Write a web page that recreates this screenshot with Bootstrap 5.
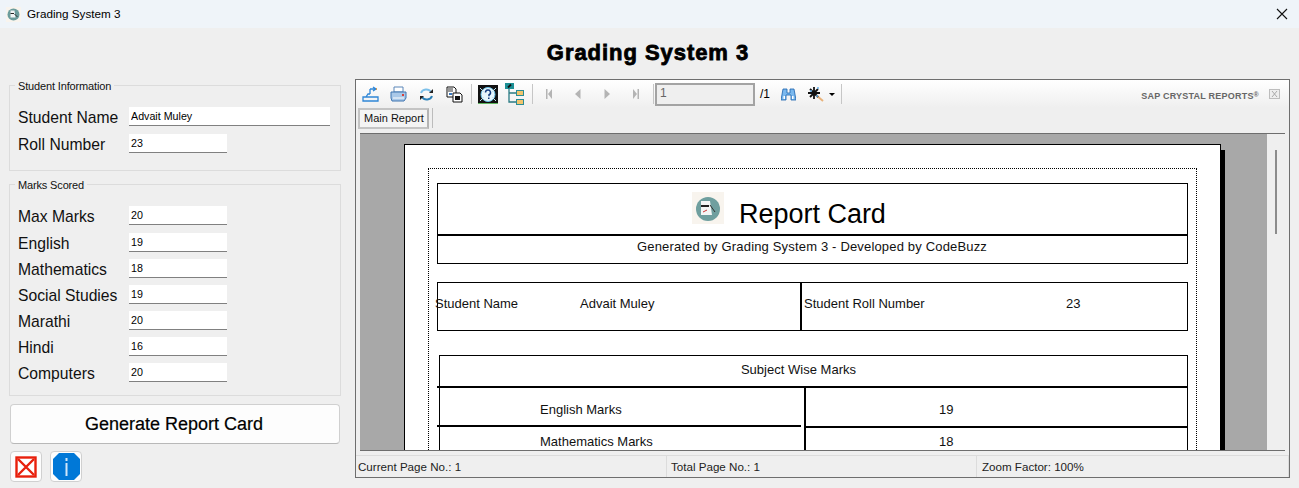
<!DOCTYPE html>
<html lang="en">
<head>
<meta charset="utf-8">
<title>Grading System 3</title>
<link href="https://cdn.jsdelivr.net/npm/bootstrap@5.3.0/dist/css/bootstrap.min.css" rel="stylesheet">
<style>
html,body{height:488px;overflow:hidden}
body{background:#efefef;font-family:"Liberation Sans",Arial,sans-serif;color:#000}
.win-bar{height:28px;background:#eff4f9;padding-left:6px;font-size:11.7px;gap:6px}
.win-close{margin-left:auto;margin-right:11px;line-height:0}
.app-title{height:50px;font-size:22px;font-weight:700;letter-spacing:.95px;-webkit-text-stroke:.8px #000;margin:0;padding-right:3px;width:100%;text-align:center;line-height:49px}
.workspace{padding-left:9px;height:410px}
.side{width:332px}
.grp{border:1px solid #dcdcdc;margin:0;padding:0 0 0 8px;min-width:0}
.grp legend{float:none;width:auto;font-size:11px;line-height:13px;margin:0 0 0 -3px;padding:2px 3px 0;letter-spacing:-.15px;color:#111}
.grp-info{height:93px}
.grp-marks{height:219px;margin-top:6px}
.frow{height:26px;align-items:flex-start}
.frow label{width:111px;font-size:15.7px;line-height:19px;padding-top:1px;white-space:nowrap;color:#111}
.row-first{margin-top:14px}
.row-top{height:27px}
.row-name{margin-top:14px}
.row-roll{margin-top:1px}
.fld.form-control{width:98px;height:19px;min-height:0;border:0;border-bottom:1px solid #808080;border-radius:0;padding:0 2px;font-size:10.7px;line-height:17px;background:#fff;color:#000;box-shadow:none}
.fld.fld-wide{width:201px}
.gen-btn.btn{display:block;width:330px;height:40px;margin:8px 0 0 1px;background:#fdfdfd;border:1px solid #d0d0d0;border-bottom-color:#b8b8b8;border-radius:4px;font-size:18px;line-height:1;color:#000;padding:0 2px 0 0;-webkit-text-stroke:.2px #000}
.ico-btn.btn{width:32px;height:31px;padding:0;background:#fdfdfd;border:1px solid #d0d0d0;border-radius:4px;display:flex;align-items:center;justify-content:center}
.ico-row{margin:7px 0 0 1px;gap:8px}
.viewer{width:935px;height:399px;margin:1px 0 0 14px;border:1px solid #6e6e6e;background:#efefef;display:flex;flex-direction:column}
.tools{height:28px;background:linear-gradient(#fff,#efefef);flex:none;align-items:center}
.tb{width:28px;height:24px;flex:none}
.sep{width:1px;height:20px;background:#c6c6c6;flex:none}
.gap-a{margin-left:3px}
.gap-b{margin-left:14px}
.gap-c{margin-left:6px}
.t-help{margin-left:6px;margin-right:7px}
.t-tree{margin-right:8px}
.t-nav{margin-left:13px;gap:23px}
.t-find{margin-left:6px}
.t-wand{margin-left:12px}
.t-caret{margin-left:5px}
.t-x{margin-right:9px}
.pg-box{width:100px;height:23px;border:2px solid #a3a3a3;background:#efefef;font-size:12px;line-height:16px;color:#666;padding-left:3px;margin-left:1px}
.pg-tot{font-size:12px;margin-left:5px;width:15px}
.brand{margin-left:auto;font-size:9px;font-weight:700;color:#666;letter-spacing:.22px;margin-right:10px;padding-top:5px}
.brand sup{font-size:7px;top:-.2em}
.tabs{height:23px;flex:none;padding-left:2px;align-items:flex-start}
.rtab{width:71px;height:21px;border:2px solid #c4c4c4;border-right-color:#b4b4b4;background:#f4f4f4;font-size:11px;line-height:17px;padding-left:4px;color:#111}
.tab-sep{width:1px;height:20px;background:#bcbcbc;margin-left:3px}
.port{flex:none;margin:2px 4px 0 4px;height:318px;border-top:1px solid #6e6e6e;border-bottom:1px solid #6e6e6e;display:flex;overflow:hidden;background:#a8a8a8}
.canvas{width:907px;flex:none;padding:10px 0 0 44px;overflow:hidden}
.paper{width:817px;height:340px;background:#fff;border:1px solid #000;box-shadow:4px 6px 0 #000;padding:23px 0 0 23px}
.dotted{width:769px;height:320px;border:1px dotted #000;border-bottom:0;padding:14px 0 0 8px;font-size:13px;color:#111}
.sbar{flex:1;background:#efefef;padding:16px 0 0 8px}
.sthumb{width:2px;height:84px;background:#8c8c8c}
.rbox{width:751px;border:1px solid #000}
.rb-head{height:50px;gap:15px;padding-left:254px;padding-top:8px}
.rb-title{font-size:27px;line-height:44px;color:#000;letter-spacing:-.02px}
.rb-sub{height:29px;border-top:2px solid #000;margin-left:-1px;text-align:center;line-height:21px;letter-spacing:.17px}
.rb-mid{height:49px;margin-top:18px}
.rb-mid .hcell{line-height:41px;white-space:nowrap}
.c-a{width:367px;flex:none;border-right:2px solid #000;margin-left:-3px;display:flex}
.c-a .k{width:145px}
.c-b{padding-left:2px;display:flex}
.c-b .k{width:262px}
.rb-sub3{width:749px;height:200px;margin:24px 0 0 2px;border-bottom:0;overflow:visible}
.rb-h3{height:32px;text-align:center;line-height:27px;letter-spacing:.02px;padding-right:27px;border-bottom:2px solid #000;margin-left:-3px}
.rb-l{width:364px;flex:none}
.rb-l .lc{margin-left:-3px;margin-right:3px;height:39px;border-bottom:2px solid #000;padding-left:103px;line-height:44px}
.rb-l .lc+.lc{border:0;height:30px;line-height:29px}
.rb-r{flex:1;border-left:2px solid #000;height:200px}
.rb-r .rc{height:40px;border-bottom:2px solid #000;padding-left:133px;line-height:44px}
.rb-r .rc+.rc{border:0;line-height:27px}
.stat{height:22px;margin-top:4px;flex:none;border-top:1px solid #dcdcdc;font-size:11.6px;line-height:21px;color:#222}
.st{height:21px;border-right:1px solid #dcdcdc}
.st1{width:310px;margin-left:1px;padding-left:1px}
.st2{width:310px;padding-left:4px}
.st3{flex:1;padding-left:5px}
</style>
</head>
<body>
<div class="win-bar d-flex align-items-center">
  <svg width="15" height="15" viewBox="0 0 15 15"><rect width="15" height="15" fill="#f8f4ee"/><circle cx="7.500" cy="7.500" r="6" fill="#6b9c9c"/><path d="M4.500 3.500h4l1 7h-5z" fill="#f2f5f5"/><path d="M4.500 6.500h3.500" stroke="#222"/><path d="M8.500 7l3 3" stroke="#333"/></svg>
  <span>Grading System 3</span>
  <span class="win-close"><svg width="12" height="12" viewBox="0 0 12 12"><path d="M1 1l10 10M11 1L1 11" stroke="#111" stroke-width="1.1"/></svg></span>
</div>
<h1 class="app-title">Grading System 3</h1>
<div class="workspace d-flex">
  <div class="side">
    <fieldset class="grp grp-info">
      <legend>Student Information</legend>
      <div class="frow d-flex row-name"><label>Student Name</label><input class="form-control fld fld-wide" value="Advait Muley"></div>
      <div class="frow d-flex row-roll"><label>Roll Number</label><input class="form-control fld" value="23"></div>
    </fieldset>
    <fieldset class="grp grp-marks">
      <legend>Marks Scored</legend>
      <div class="frow d-flex row-first row-top"><label>Max Marks</label><input class="form-control fld" value="20"></div>
      <div class="frow d-flex"><label>English</label><input class="form-control fld" value="19"></div>
      <div class="frow d-flex"><label>Mathematics</label><input class="form-control fld" value="18"></div>
      <div class="frow d-flex"><label>Social Studies</label><input class="form-control fld" value="19"></div>
      <div class="frow d-flex"><label>Marathi</label><input class="form-control fld" value="20"></div>
      <div class="frow d-flex"><label>Hindi</label><input class="form-control fld" value="16"></div>
      <div class="frow d-flex"><label>Computers</label><input class="form-control fld" value="20"></div>
    </fieldset>
    <button class="btn gen-btn" type="button">Generate Report Card</button>
    <div class="d-flex ico-row">
      <button class="btn ico-btn" type="button" aria-label="Close"><svg width="22" height="22" viewBox="0 0 22 22"><rect x="1.500" y="1.500" width="19" height="19" fill="#fff" stroke="#e8200c" stroke-width="2.400"/><path d="M3 3l16 16M19 3L3 19" stroke="#e8200c" stroke-width="2.400"/></svg></button>
      <button class="btn ico-btn" type="button" aria-label="About"><svg width="27" height="27" viewBox="0 0 27 27"><path d="M6 0h15l6 6v15l-6 6H6l-6-6V6z" fill="#0078d7"/><rect x="12.500" y="5" width="2" height="3" fill="#cfe6fa"/><rect x="12.500" y="10" width="2" height="13" fill="#cfe6fa"/></svg></button>
    </div>
  </div>
  <div class="viewer">
    <div class="tools d-flex">
      <span class="tb d-flex align-items-center justify-content-center"><svg width="17" height="17" viewBox="0 0 17 17" fill="none" stroke="#2f86d6" stroke-width="1.300"><path d="M1 11h15v4H1zM4 11l2-3h2M8 8V3"/><path d="M8 3h5M11 1l3 2-3 2" stroke="#2f86d6"/><path d="M14 3h1" stroke="#e08a2a"/></svg></span>
      <span class="tb d-flex align-items-center justify-content-center"><svg width="17" height="16" viewBox="0 0 17 16"><path d="M4 1h9v5H4z" fill="#fff" stroke="#5a86b8"/><path d="M1 6h15v6l-2 3H2l-1-3z" fill="#a9c8e8" stroke="#3f74b0"/><path d="M3 12h11" stroke="#fff"/><rect x="12" y="8" width="2" height="2" fill="#d8403a"/></svg></span>
      <span class="tb d-flex align-items-center justify-content-center"><svg width="15" height="15" viewBox="0 0 15 15" fill="none" stroke-width="2"><path d="M2 6a5.500 5 0 0 1 10-1" stroke="#7cc0ea"/><path d="M13 9a5.500 5 0 0 1-10 1" stroke="#2a80b8"/><path d="M14 2v4h-4z" fill="#222"/><path d="M1 13V9h4z" fill="#222"/></svg></span>
      <span class="tb d-flex align-items-center justify-content-center"><svg width="17" height="17" viewBox="0 0 17 17"><path d="M1 1h7l2 2v8H1z" fill="#fff" stroke="#111"/><path d="M7 7h7l2 2v7H7z" fill="#fff" stroke="#111"/><path d="M2 3h5M2 5h5" stroke="#333"/><rect x="9" y="10" width="5" height="4" fill="#111"/><rect x="3" y="7" width="3" height="2" fill="#3a7ac0"/></svg></span>
      <span class="sep gap-a"></span>
      <span class="d-flex t-help"><svg width="20" height="19" viewBox="0 0 20 19"><rect width="20" height="19" fill="#111"/><rect y="18" width="20" height="1" fill="#5fb55f"/><circle cx="10" cy="9.500" r="7" fill="#e6f5fb" stroke="#6cc2e8"/><path d="M2 3l4 4M18 3l-4 4M2 16l4-4M18 16l-4-4" stroke="#bfe4f2" stroke-width="1"/><path d="M7.500 7.500a2.500 2.500 0 1 1 3.500 2.300v1.500" fill="none" stroke="#123c80" stroke-width="1.500"/><rect x="10" y="12.500" width="1.500" height="1.500" fill="#123c80"/></svg></span>
      <span class="d-flex t-tree"><svg width="19" height="22" viewBox="0 0 19 22"><rect width="9" height="6" fill="#1b8f95"/><path d="M3 4.500l3-3" stroke="#111" stroke-width="1.800"/><path d="M4 6v13h7M4 10h7" fill="none" stroke="#2a7b84" stroke-width="1.300"/><rect x="11.500" y="7.500" width="7" height="5" fill="#f1c46c" stroke="#2a8c94"/><rect x="11.500" y="16.500" width="7" height="5" fill="#f1c46c" stroke="#2a8c94"/></svg></span>
      <span class="sep"></span>
      <span class="d-flex align-items-center t-nav">
        <svg width="6" height="10" viewBox="0 0 6 10" fill="#b4b4b4"><rect width="1.500" height="10"/><path d="M6 0v10L2 5z"/></svg>
        <svg width="6" height="10" viewBox="0 0 6 10" fill="#b4b4b4"><path d="M5.500 0v10L0 5z"/></svg>
        <svg width="6" height="10" viewBox="0 0 6 10" fill="#b4b4b4"><path d="M.5 0v10L6 5z"/></svg>
        <svg width="6" height="10" viewBox="0 0 6 10" fill="#b4b4b4"><path d="M0 0v10l4-5z"/><rect x="4.500" width="1.500" height="10"/></svg>
      </span>
      <span class="sep gap-b"></span>
      <span class="pg-box">1</span>
      <span class="pg-tot">/1</span>
      <span class="d-flex t-find"><svg width="15" height="14" viewBox="0 0 15 14"><path d="M2 2h4v4h3V2h4l2 11h-5V8H5v5H0z" fill="#7ab8ee" stroke="#1a62ad" stroke-width=".8"/><rect x="2.500" y="9" width="1.500" height="3" fill="#fff"/><rect x="11" y="9" width="1.500" height="3" fill="#fff"/></svg></span>
      <span class="d-flex t-wand"><svg width="16" height="15" viewBox="0 0 16 15"><path d="M8 8l7 6" stroke="#e8b27a" stroke-width="2"/><path d="M6 0v12M0 6h12M2 2l8 8M10 2l-8 8" stroke="#111" stroke-width="1.800"/><path d="M2 4h2M9 1h2M8 9h2" stroke="#6cb4ec" stroke-width="1.500"/></svg></span>
      <span class="d-flex t-caret"><svg width="6" height="3" viewBox="0 0 6 3"><path d="M0 0h6L3 3z" fill="#000"/></svg></span>
      <span class="sep gap-c"></span>
      <span class="brand">SAP CRYSTAL REPORTS<sup>®</sup></span>
      <span class="d-flex t-x"><svg width="11" height="10" viewBox="0 0 11 10"><rect x=".5" y=".5" width="10" height="9" fill="#eee" stroke="#bdbdbd"/><path d="M3 2l5 6M8 2L3 8" stroke="#aaa"/></svg></span>
    </div>
    <div class="tabs d-flex"><div class="rtab">Main Report</div><div class="tab-sep"></div></div>
    <div class="port">
      <div class="canvas">
        <div class="paper">
          <div class="dotted">
            <div class="rbox">
              <div class="rb-head d-flex">
                <svg width="32" height="32" viewBox="0 0 32 32"><rect width="32" height="32" fill="#f8f4ee"/><circle cx="16" cy="17" r="12" fill="#6f9f9f"/><path d="M9 9h9l2 14H9z" fill="#f4f6f6"/><rect x="9" y="13" width="8" height="2" fill="#222"/><path d="M11 20l4-2" stroke="#c33"/><path d="M18 13l5 7" stroke="#333"/></svg>
                <span class="rb-title">Report Card</span>
              </div>
              <div class="rb-sub">Generated by Grading System 3 - Developed by CodeBuzz</div>
            </div>
            <div class="rbox rb-mid d-flex">
              <div class="hcell c-a"><span class="k">Student Name</span><span>Advait Muley</span></div>
              <div class="hcell c-b"><span class="k">Student Roll Number</span><span>23</span></div>
            </div>
            <div class="rbox rb-sub3">
              <div class="rb-h3">Subject Wise Marks</div>
              <div class="d-flex">
                <div class="rb-l"><div class="lc">English Marks</div><div class="lc">Mathematics Marks</div></div>
                <div class="rb-r"><div class="rc">19</div><div class="rc">18</div></div>
              </div>
            </div>
          </div>
        </div>
      </div>
      <div class="sbar"><div class="sthumb"></div></div>
    </div>
    <div class="stat d-flex">
      <div class="st st1">Current Page No.: 1</div>
      <div class="st st2">Total Page No.: 1</div>
      <div class="st st3">Zoom Factor: 100%</div>
    </div>
  </div>
</div>
<script src="https://cdn.jsdelivr.net/npm/bootstrap@5.3.0/dist/js/bootstrap.bundle.min.js"></script>
</body>
</html>
